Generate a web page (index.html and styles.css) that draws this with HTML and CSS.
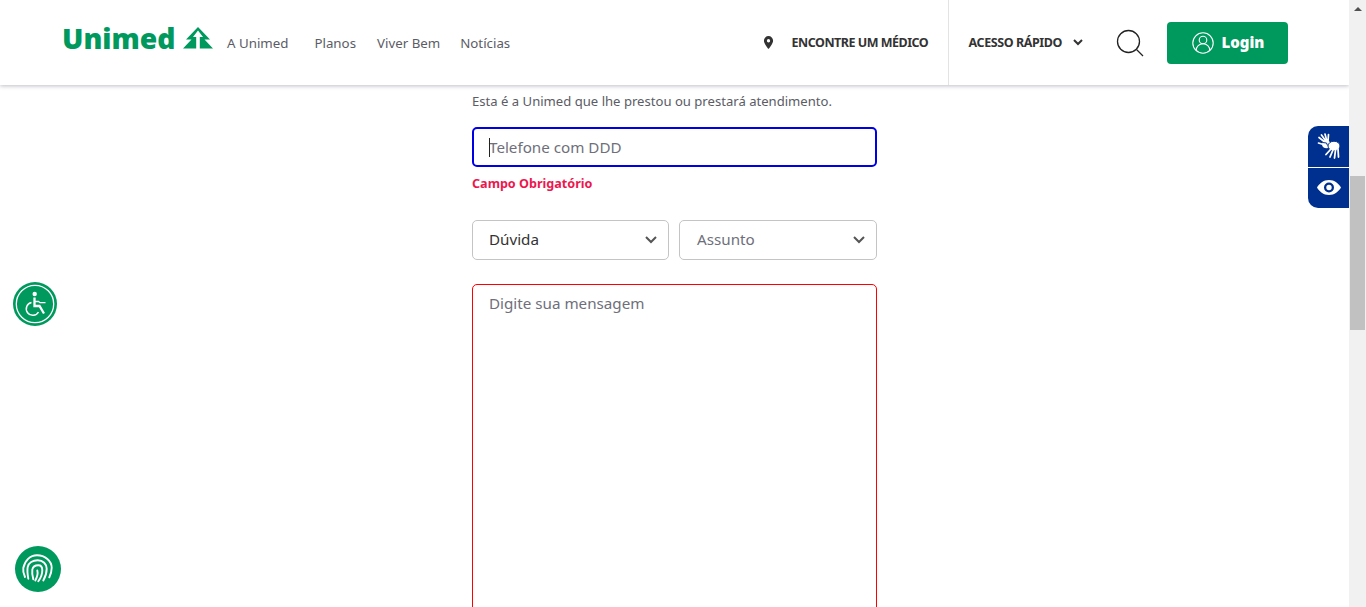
FILE: index.html
```html
<!DOCTYPE html>
<html lang="pt-BR">
<head>
  <meta charset="UTF-8">
  <title>Unimed - Fale Conosco</title>
  <link rel="stylesheet" href="styles.css">
</head>
<body>
  <div class="page">
    <div class="content">
      <header class="topbar">
        <a class="logo">
          <span class="logo-word">Unimed</span>
          <svg class="logo-tree" viewBox="0 0 30 22" width="30" height="22">
            <path fill="#00995d" d="M15 0L27 12.500H21.500L30 21.500H16.800V10H20L15 3.500L10 10H13.200V21.500H0L8.500 12.500H3Z"/>
          </svg>
        </a>
        <nav class="main-nav">
          <a class="nav-first">A Unimed</a>
          <a class="nav-plans">Planos</a>
          <a class="nav-live">Viver Bem</a>
          <a>Notícias</a>
        </nav>
        <a class="find-doctor">
          <svg viewBox="0 0 12 14" width="11" height="13">
            <path fill="#333" fill-rule="evenodd" d="M6 0a5 5 0 0 1 5 5c0 3.400-5 9-5 9S1 8.400 1 5a5 5 0 0 1 5-5zm0 3.300a1.800 1.800 0 1 0 0 3.600 1.800 1.800 0 0 0 0-3.600z"/>
          </svg>
          <span>ENCONTRE UM MÉDICO</span>
        </a>
        <div class="quick-access">
          <span>ACESSO RÁPIDO</span>
          <svg viewBox="0 0 10 7" width="10" height="7">
            <path fill="none" stroke="#333" stroke-width="2" d="M1 1l4 4 4-4"/>
          </svg>
        </div>
        <svg class="search-icon" viewBox="0 0 28 28" width="28" height="28">
          <circle cx="12.500" cy="12.500" r="11" fill="none" stroke="#222" stroke-width="1.300"/>
          <path stroke="#222" stroke-width="1.300" d="M20.500 20.500l6.500 6.500"/>
        </svg>
        <a class="login-btn">
          <svg viewBox="0 0 22 22" width="22" height="22" fill="none" stroke="#fff" stroke-width="1.100">
            <circle cx="11" cy="11" r="10.200"/>
            <circle cx="11" cy="8" r="3.800"/>
            <path d="M4.200 18.500c0-4 3-6.700 6.800-6.700s6.800 2.700 6.800 6.700"/>
          </svg>
          <span>Login</span>
        </a>
      </header>

      <main class="form-col">
        <p class="hint">Esta é a Unimed que lhe prestou ou prestará atendimento.</p>
        <div class="field field-focus">
          <span class="caret"></span>
          <span class="placeholder">Telefone com DDD</span>
        </div>
        <p class="error">Campo Obrigatório</p>
        <div class="select-row">
          <div class="field select">
            <span class="value">Dúvida</span>
            <svg viewBox="0 0 12 8" width="12" height="8"><path fill="none" stroke="#555" stroke-width="2" d="M1 1l5 5 5-5"/></svg>
          </div>
          <div class="field select">
            <span class="placeholder">Assunto</span>
            <svg viewBox="0 0 12 8" width="12" height="8"><path fill="none" stroke="#555" stroke-width="2" d="M1 1l5 5 5-5"/></svg>
          </div>
        </div>
        <div class="message">
          <span class="placeholder">Digite sua mensagem</span>
        </div>
      </main>
    </div>

    <div class="scrollbar">
      <svg class="scroll-arrow" viewBox="0 0 8 4" width="8" height="4"><path fill="#505050" d="M0 4l4-4 4 4z"/></svg>
      <div class="scroll-thumb"></div>
    </div>
  </div>

  <div class="side-tabs">
    <div class="side-tab">
      <svg viewBox="0 0 24 26" width="24" height="26">
        <g fill="none" stroke="#fff" stroke-width="1.700" stroke-linecap="round">
          <path d="M9 10L2 4.500M9.500 9L4.500 2M10 8.500L8 1M11 8.500L11.500 1.500M8 12L1.500 10"/>
        </g>
        <ellipse cx="9.500" cy="11.500" rx="4.500" ry="3.800" fill="#fff"/>
        <ellipse cx="17" cy="13" rx="6" ry="4.800" fill="#fff" stroke="#00308f" stroke-width="1"/>
        <g fill="none" stroke="#fff" stroke-width="1.800" stroke-linecap="round">
          <path d="M14 16L9 21.500M16 17L13 24M18.500 17L17.500 25M21 16L21.500 24"/>
        </g>
        <path fill="none" stroke="#00308f" stroke-width="1" d="M5.500 9.500l4 .5 1 2.500"/>
      </svg>
    </div>
    <div class="side-tab">
      <svg viewBox="0 0 24 15" width="24" height="15">
        <path fill="#fff" fill-rule="evenodd" d="M12 0c5.500 0 9.800 3.600 12 7.500C21.800 11.400 17.500 15 12 15S2.200 11.400 0 7.500C2.200 3.600 6.500 0 12 0zm0 2.500a5 5 0 1 0 0 10 5 5 0 0 0 0-10zm0 2.300a2.700 2.700 0 1 1 0 5.400 2.700 2.700 0 0 1 0-5.400z"/>
      </svg>
    </div>
  </div>

  <div class="round-btn round-access">
    <svg viewBox="0 0 44 44" width="44" height="44" fill="none" stroke="#fff">
      <circle cx="22" cy="22" r="18.700" stroke-width="1.300"/>
      <circle cx="21.700" cy="12" r="2.200" fill="#fff" stroke="none"/>
      <path stroke-width="2.300" d="M21.500 15.500v8.500h5l4.500 7.500"/>
      <path stroke-width="1.300" d="M22 19.500h3.500l1.500 1.200h5.500"/>
      <path stroke-width="1.500" d="M18.500 20.500a6.500 6.500 0 1 0 7 9.500"/>
    </svg>
  </div>

  <div class="round-btn round-print">
    <svg viewBox="0 0 46 46" width="46" height="46" fill="none" stroke="#fff" stroke-width="1.900" stroke-linecap="round">
      <path d="M10 31c-1.500-3-2.200-6-1.700-9C9.800 14.500 15 9.300 22 9.300c8 0 14.700 5.500 14.700 12.500 0 3.500-1 6.500-2.400 9.500"/>
      <path d="M13.300 32.700c-.7-4-1.300-8.200-.6-11.700 1-4 5-6.700 10-6.700 5.300 0 9 3.700 9 8.400 0 4.300-1.300 8-3.400 11.800"/>
      <path d="M18.300 33.300c-.8-3-1.500-6-1-9.600.5-2.700 3-4.400 6-4.400 2.400 0 4 2 4 5 0 3.700-1.300 7.400-4 11"/>
      <path d="M22.300 24.500c.8 3 .2 6-2 10"/>
    </svg>
  </div>
</body>
</html>
```

FILE: styles.css
```css
* {
  box-sizing: border-box;
}
html, body {
  margin: 0;
  height: 607px;
  overflow: hidden;
}
body {
  font-family: "Noto Sans", Arial, sans-serif;
  color: #5b5c65;
  background-color: #fff;
}
.page {
  display: flex;
  height: 607px;
}
.content {
  flex: 1;
  min-width: 0;
}

/* header */
.topbar {
  display: flex;
  align-items: center;
  height: 85px;
  padding-left: 62px;
  background-color: #fff;
  box-shadow: 0 1px 4px rgba(40, 40, 70, 0.3);
}
.logo {
  display: flex;
  align-items: center;
  justify-content: space-between;
  width: 151px;
  margin-right: 14px;
  margin-top: -10px;
}
.logo-word {
  font-family: "Open Sans", sans-serif;
  font-weight: 800;
  font-size: 28.300px;
  line-height: 30px;
  color: #00995d;
}
.main-nav {
  display: flex;
  font-size: 13.300px;
  color: #5b5c65;
}
.nav-first {
  margin-right: 26px;
}
.nav-plans {
  margin-right: 21px;
}
.nav-live {
  margin-right: 20px;
}
.find-doctor {
  display: flex;
  align-items: center;
  gap: 18px;
  margin-left: auto;
  width: 186px;
  height: 85px;
  font-size: 12.500px;
  font-weight: 700;
  letter-spacing: -0.5px;
  color: #333;
  border-right: 1px solid #e3e3e3;
}
.quick-access {
  display: flex;
  align-items: center;
  gap: 11px;
  margin-left: 20px;
  font-size: 12.500px;
  font-weight: 700;
  letter-spacing: -0.42px;
  color: #333;
}
.search-icon {
  margin-left: 33px;
}
.login-btn {
  display: flex;
  align-items: center;
  justify-content: center;
  gap: 8px;
  width: 121px;
  height: 42px;
  margin-left: 23px;
  margin-right: 61px;
  padding-left: 1px;
  background-color: #00995d;
  border-radius: 4px;
  color: #fff;
  font-size: 15px;
  line-height: 20px;
  font-weight: 900;
}
.login-btn span {
  margin-top: -2px;
}

/* form */
.form-col {
  display: flex;
  flex-direction: column;
  width: 405px;
  margin-left: 472px;
}
.hint {
  margin: 7px 0 16px;
  font-size: 13.100px;
  line-height: 19px;
  color: #5b5c65;
}
.field {
  display: flex;
  align-items: center;
  height: 40px;
  padding: 0 16px 2px;
  border: 1px solid #c4c4c4;
  border-radius: 5px;
  font-size: 15.200px;
}
.field-focus {
  position: relative;
  border: 2px solid #0000e6;
  padding: 0 15px 1px;
}
.caret {
  position: absolute;
  left: 15px;
  top: 9px;
  width: 1px;
  height: 19px;
  background-color: #222;
}
.placeholder {
  color: #6e6f7a;
}
.value {
  color: #333;
}
.error {
  margin: 9px 0 28px;
  font-size: 12.600px;
  line-height: 16px;
  font-weight: 700;
  color: #ec174f;
}
.select-row {
  display: flex;
  justify-content: space-between;
}
.select {
  width: 197px;
  justify-content: space-between;
  padding-right: 11px;
}
.select svg {
  margin-top: 2px;
}
.select + .select {
  width: 198px;
  padding-left: 17px;
}
.message {
  height: 340px;
  margin-top: 24px;
  padding: 7px 16px;
  border: 1px solid #f00;
  border-radius: 5px;
  font-size: 15.200px;
  line-height: 22px;
}

/* fake scrollbar */
.scrollbar {
  position: relative;
  width: 17px;
  background-color: #f1f1f1;
}
.scroll-arrow {
  display: block;
  margin: 7px auto 0;
}
.scroll-thumb {
  position: absolute;
  left: 1px;
  top: 176px;
  width: 15px;
  height: 154px;
  background-color: #c1c1c1;
}

/* floating buttons */
.side-tabs {
  position: absolute;
  left: 1308px;
  top: 126px;
  width: 41px;
  height: 82px;
  display: flex;
  flex-direction: column;
  gap: 1px;
  border-radius: 10px 0 0 10px;
  overflow: hidden;
}
.side-tab {
  flex: 1;
  display: flex;
  align-items: center;
  justify-content: center;
  background-color: #00308f;
}
.round-btn {
  position: absolute;
  border-radius: 50%;
  background-color: #00995d;
}
.round-btn svg {
  display: block;
}
.round-access {
  left: 13px;
  top: 282px;
  width: 44px;
  height: 44px;
}
.round-print {
  left: 15px;
  top: 546px;
  width: 46px;
  height: 46px;
}
```
